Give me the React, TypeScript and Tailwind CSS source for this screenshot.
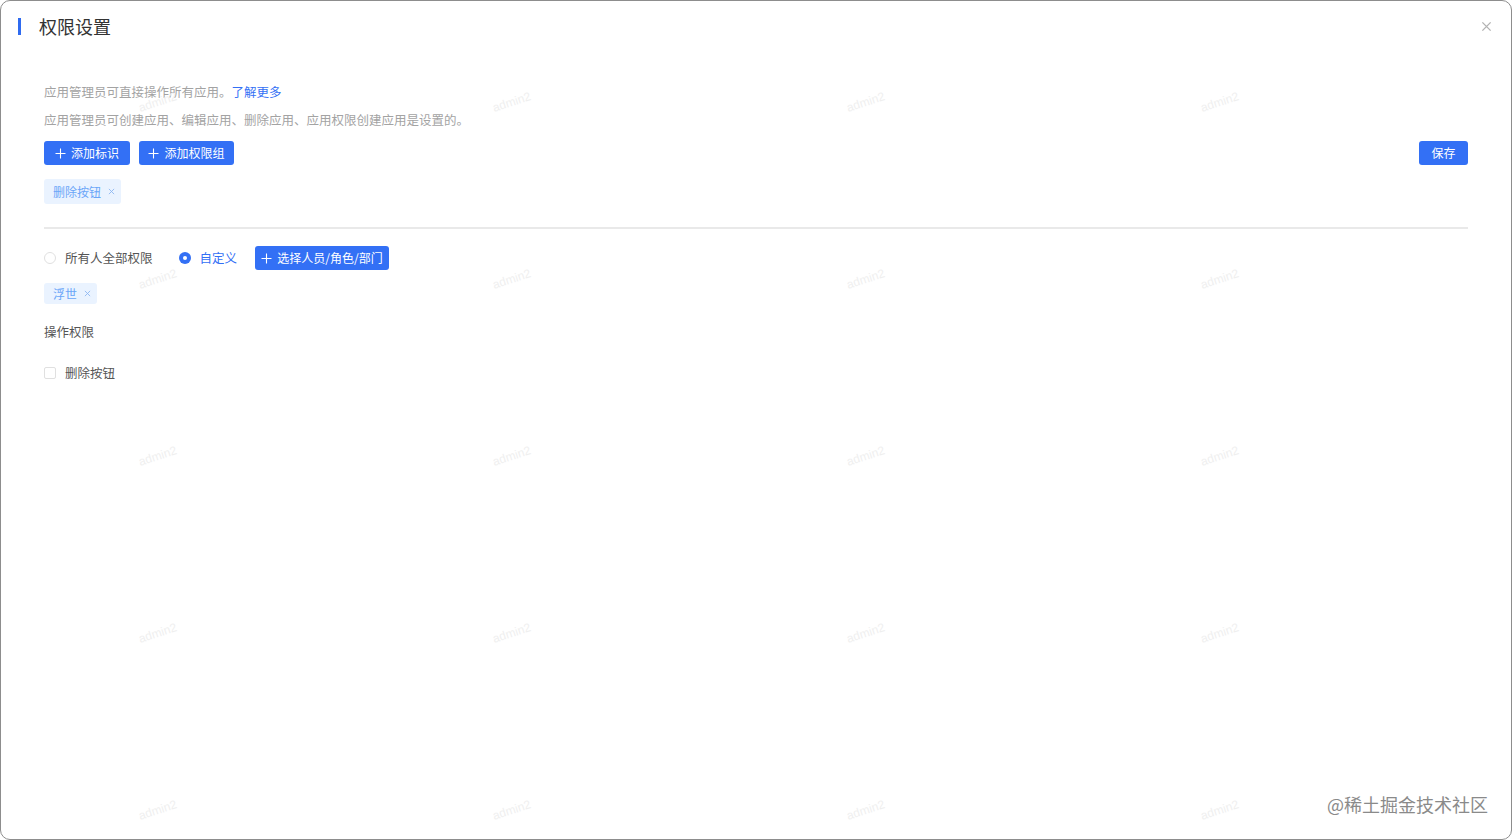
import React, { useState } from "react";

const font = { fontFamily: '"Noto Sans CJK SC", "Noto Sans", sans-serif' };

function PlusIcon() {
  return (
    <svg width="11" height="11" viewBox="0 0 11 11" className="shrink-0">
      <path d="M5.5 0.5v10M0.5 5.5h10" stroke="currentColor" strokeWidth="1.1" fill="none" />
    </svg>
  );
}

function SmallX({ size = 7 }: { size?: number }) {
  return (
    <svg width={size} height={size} viewBox="0 0 8 8">
      <path d="M1 1l6 6M7 1l-6 6" stroke="currentColor" strokeWidth="1" fill="none" />
    </svg>
  );
}

function Button({ children, className = "" }: { children: React.ReactNode; className?: string }) {
  return (
    <button
      className={
        "h-6 flex items-center justify-center gap-[5px] rounded-[3px] bg-[#3370f5] text-white text-[12px] leading-none " +
        className
      }
    >
      {children}
    </button>
  );
}

function Tag({ label, className = "" }: { label: string; className?: string }) {
  return (
    <div
      className={
        "inline-flex items-center gap-[7px] rounded-[3px] bg-[#eaf3ff] pl-[9px] pr-[6px] text-[12px] text-[#6aa6f8] " +
        className
      }
    >
      <span>{label}</span>
      <span className="text-[#8bb6f2]">
        <SmallX />
      </span>
    </div>
  );
}

export default function App() {
  const [mode, setMode] = useState<"all" | "custom">("custom");
  const [checked, setChecked] = useState(false);

  const marks = Array.from({ length: 20 });

  return (
    <div style={font} className="h-[840px] w-full bg-white">
      <div className="relative h-full w-full overflow-hidden rounded-[10px] border border-[#8d8d8d] bg-white">
        {/* header */}
        <div className="flex items-center justify-between pl-[17px] pr-[19px] pt-[14px]">
          <div className="flex items-center gap-[18px]">
            <div className="h-[17px] w-[3px] bg-[#2f6bf0]" />
            <h1 className="text-[18px] leading-[22px] text-[#333]">权限设置</h1>
          </div>
          <button className="text-[#b3b3b3]">
            <SmallX size={11} />
          </button>
        </div>

        <div className="px-[43px] pt-[46px]">
          <p className="text-[12.5px] leading-[18px] text-[#a3a3a3]">
            应用管理员可直接操作所有应用。<span className="text-[#3370f5]">了解更多</span>
          </p>
          <p className="mt-[10px] text-[12.5px] leading-[18px] text-[#a3a3a3]">
            应用管理员可创建应用、编辑应用、删除应用、应用权限创建应用是设置的。
          </p>

          <div className="mt-[12px] flex items-center justify-between">
            <div className="flex items-center gap-[9px]">
              <Button className="w-[86px]">
                <PlusIcon />
                添加标识
              </Button>
              <Button className="w-[95px]">
                <PlusIcon />
                添加权限组
              </Button>
            </div>
            <Button className="w-[49px]">保存</Button>
          </div>

          <Tag label="删除按钮" className="mt-[14px] h-[25px]" />

          <div className="mt-[23px] h-[2px] bg-[#e9e9e9]" />

          <div className="mt-[17px] flex items-center">
            <label className="flex cursor-pointer items-center gap-[9px]" onClick={() => setMode("all")}>
              <span
                className={
                  mode === "all"
                    ? "flex h-[12px] w-[12px] items-center justify-center rounded-full bg-[#3370f5]"
                    : "h-[12px] w-[12px] rounded-full border border-[#e0e0e0]"
                }
              >
                {mode === "all" && <span className="h-[4px] w-[4px] rounded-full bg-white" />}
              </span>
              <span className={"text-[12.5px] " + (mode === "all" ? "text-[#3370f5]" : "text-[#555]")}>
                所有人全部权限
              </span>
            </label>
            <label className="ml-[26px] flex cursor-pointer items-center gap-[9px]" onClick={() => setMode("custom")}>
              <span
                className={
                  mode === "custom"
                    ? "flex h-[12px] w-[12px] items-center justify-center rounded-full bg-[#3370f5]"
                    : "h-[12px] w-[12px] rounded-full border border-[#e0e0e0]"
                }
              >
                {mode === "custom" && <span className="h-[4px] w-[4px] rounded-full bg-white" />}
              </span>
              <span className={"text-[12.5px] " + (mode === "custom" ? "text-[#3370f5]" : "text-[#555]")}>
                自定义
              </span>
            </label>
            <Button className="ml-[18px] w-[134px]">
              <PlusIcon />
              选择人员/角色/部门
            </Button>
          </div>

          <Tag label="浮世" className="mt-[13px] h-[21px]" />

          <p className="mt-[19px] text-[12.5px] leading-[18px] text-[#555]">操作权限</p>

          <label className="mt-[23px] flex w-fit cursor-pointer items-center gap-[9px]" onClick={() => setChecked(!checked)}>
            <span
              className={
                "flex h-[12px] w-[12px] items-center justify-center rounded-[2px] border " +
                (checked ? "border-[#3370f5] bg-[#3370f5]" : "border-[#e0e0e0] bg-white")
              }
            >
              {checked && (
                <svg width="8" height="8" viewBox="0 0 8 8">
                  <path d="M1 4l2 2 4-4" stroke="white" strokeWidth="1.3" fill="none" />
                </svg>
              )}
            </span>
            <span className="text-[12.5px] text-[#555]">删除按钮</span>
          </label>
        </div>

        {/* watermark layer */}
        <div className="pointer-events-none absolute left-[-20px] top-[12px] grid grid-cols-[repeat(4,354px)] auto-rows-[177px]">
          {marks.map((_, i) => (
            <div key={i} className="flex items-center justify-center">
              <span
                className="-rotate-[18deg] text-[12px] text-[#efefef]"
                style={{ fontFamily: '"Liberation Sans", sans-serif' }}
              >
                admin2
              </span>
            </div>
          ))}
        </div>

        <div className="pointer-events-none absolute bottom-[23px] right-[23px] text-[18px] leading-[24px] text-[#8a8a8a] [text-shadow:0_0_2px_#fff]">
          @稀土掘金技术社区
        </div>
      </div>
    </div>
  );
}
